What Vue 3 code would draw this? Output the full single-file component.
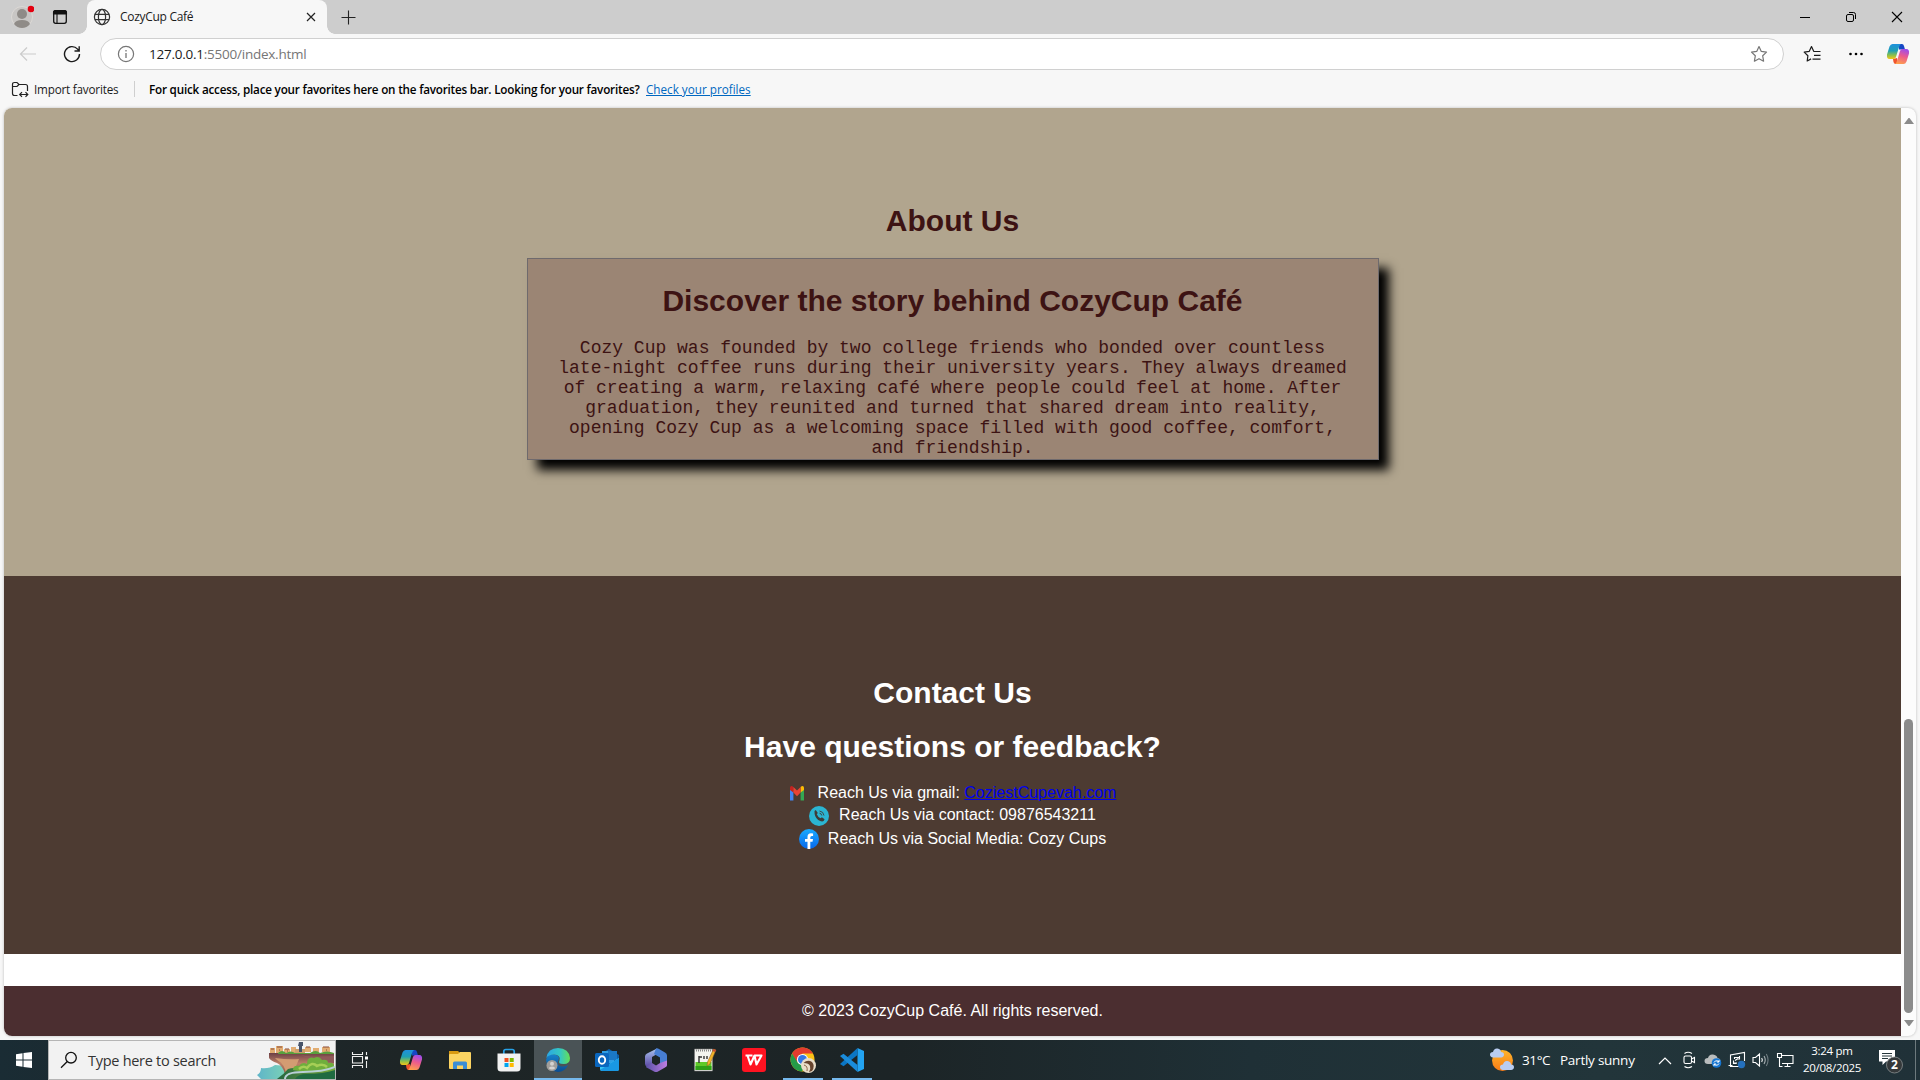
<script setup>
const story = [
  'Cozy Cup was founded by two college friends who bonded over countless',
  'late-night coffee runs during their university years. They always dreamed',
  'of creating a warm, relaxing café where people could feel at home. After',
  'graduation, they reunited and turned that shared dream into reality,',
  'opening Cozy Cup as a welcoming space filled with good coffee, comfort,',
  'and friendship.'
]
</script>

<template>
  <div class="screen">
    <header class="tabs">
      <svg class="avatar" width="24" height="24" viewBox="0 0 24 24">
        <circle cx="12" cy="12" r="10.500" fill="#c8c6c4" stroke="#dcd9d6" />
        <circle cx="12" cy="9" r="5" fill="#8f8b87" />
        <path d="M4 19q1.500-4 8-4t8 4q-3 4-8 4t-8-4z" fill="#8f8b87" />
        <circle cx="21" cy="4" r="3.300" fill="#e3000f" />
      </svg>
      <svg class="tabmenu" width="16" height="16" viewBox="0 0 16 16">
        <rect x="1.700" y="1.700" width="12.600" height="12.600" rx="2" fill="none" stroke="#111" stroke-width="1.300" />
        <path d="M1.500 5V3.500q0-2 2-2h9q2 0 2 2V5zM5 5v9" fill="#111" stroke="#111" stroke-width="1.100" />
      </svg>
      <div class="tab">
        <svg width="18" height="18" viewBox="0 0 18 18" fill="none" stroke="#333" stroke-width="1.200">
          <circle cx="9" cy="9" r="7.600" /><ellipse cx="9" cy="9" rx="3.600" ry="7.600" /><path d="M2 6.300h14M2 11.700h14" />
        </svg>
        <span class="ui title">CozyCup Café</span>
        <svg class="close" width="10" height="10" viewBox="0 0 10 10"><path d="M1 1l8 8M9 1l-8 8" stroke="#222" stroke-width="1.200" /></svg>
      </div>
      <svg class="plus" width="16" height="16" viewBox="0 0 16 16"><path d="M7.500 1.500v14M.5 8.500h14" stroke="#222" stroke-width="1.100" /></svg>
      <div class="wincontrols">
        <svg width="12" height="12" viewBox="0 0 12 12"><path d="M1 6.500h10" stroke="#000" /></svg>
        <svg width="12" height="12" viewBox="0 0 12 12" fill="none" stroke="#000"><rect x="1.500" y="3.500" width="7" height="7" rx="1.500" /><path d="M4 1.500h4.500q2 0 2 2V8" /></svg>
        <svg width="12" height="12" viewBox="0 0 12 12"><path d="M1 1l10 10M11 1L1 11" stroke="#000" stroke-width="1.100" /></svg>
      </div>
    </header>

    <div class="toolbar">
      <svg class="back" width="18" height="16" viewBox="0 0 18 16" fill="none" stroke="#cbcbcb" stroke-width="1.200"><path d="M17 8H1.500M8 1.500L1.500 8 8 14.500" /></svg>
      <svg class="reload" width="18" height="18" viewBox="0 0 18 18" fill="none" stroke="#1b1b1b" stroke-width="1.400"><path d="M16.500 9A7.500 7.500 0 1 1 14.600 4.100L16 5.800M16.200 1.300v4.700h-4.700" /></svg>
      <div class="address">
        <svg width="18" height="18" viewBox="0 0 18 18"><circle cx="9" cy="9" r="7.600" fill="none" stroke="#767676" stroke-width="1.200" /><path d="M9 8v5M9 5v1.500" stroke="#767676" stroke-width="1.300" /></svg>
        <span class="ui url"><b>127.0.0.1</b>:5500/index.html</span>
        <svg class="star" width="18" height="18" viewBox="0 0 18 18" fill="none" stroke="#767676" stroke-width="1.200" stroke-linejoin="round"><path d="M9 1.500l2.300 4.900 5.200.7-3.800 3.700.9 5.400L9 13.700l-4.600 2.500.9-5.400L1.500 7.100l5.200-.7z" /></svg>
      </div>
      <svg class="favs" width="18" height="18" viewBox="0 0 18 18" fill="none" stroke="#1b1b1b" stroke-width="1.200" stroke-linejoin="round"><path d="M12 6.500l-1.300-.2L8.500 1.500 6.300 6.300l-5.100.8L4.900 10.700 4.200 16l3.900-2.100M11 6.500h6.500M11 10.300h6.500M9.500 14.100h8" /></svg>
      <svg class="dots" width="16" height="4" viewBox="0 0 16 4"><circle cx="2.500" cy="2" r="1.300" /><circle cx="8" cy="2" r="1.300" /><circle cx="13.500" cy="2" r="1.300" /></svg>
      <svg class="copilot" width="24" height="22" viewBox="0 0 24 22"><use href="#copilot" /></svg>
    </div>

    <div class="favbar">
      <svg width="18" height="17" viewBox="0 0 18 17" fill="none" stroke="#222" stroke-width="1.200"><path d="M6.500 14.500H3.500q-2 0-2-2V3.500q0-2 2-2h2.500l2 2h6.500q2 0 2 2V10M1.500 5.500h4.500l2-2M9 13.500h7.500M11 11.200l-2.300 2.300L11 15.800M14.500 11.200l2.300 2.300-2.300 2.300" /></svg>
      <span class="ui import">Import favorites</span>
      <i class="sep"></i>
      <span class="ui hint">For quick access, place your favorites here on the favorites bar. Looking for your favorites?</span>
      <span class="ui profiles">Check your profiles</span>
    </div>

    <div class="viewport">
      <main>
        <section class="about">
          <h1>About Us</h1>
          <div class="box">
            <h1>Discover the story behind CozyCup Café</h1>
            <p><span v-for="line in story" :key="line">{{ line }}</span></p>
          </div>
        </section>
        <section class="contact">
          <h1>Contact Us</h1>
          <h1 class="question">Have questions or feedback?</h1>
          <div class="line l1">
            <svg width="16" height="16" viewBox="0 0 16 16"><path d="M1 2.500v13h3.400V6z" fill="#4285f4" /><path d="M15 2.500v13h-3.400V6z" fill="#34a853" /><path d="M1 2.500Q2-.2 4.400 2v5.500L1 5z" fill="#c5221f" /><path d="M15 2.500Q14-.2 11.600 2v5.500L15 5z" fill="#fbbc04" /><path d="M4.400 2L8 5.500 11.600 2v5.500L8 11.200 4.400 7.500z" fill="#ea4335" /></svg>
            <span>Reach Us via gmail: <a>CoziestCupevah.com</a></span>
          </div>
          <div class="line l2">
            <svg width="20" height="20" viewBox="0 0 20 20"><circle cx="10" cy="10" r="10" fill="#2bb5d2" /><path d="M5.500 5l1.300-1 2 3-1 1.300q.9 2.500 3.800 4l1.300-1 2.700 2-1 1.700q-2 1.200-5.400-1Q5.200 11 5.500 5z" fill="#3f3c38" /><path d="M10.500 5q4 .5 4.500 4.500M10.500 7.200q2 .3 2.300 2.300" fill="none" stroke="#3f3c38" stroke-width=".9" /></svg>
            <span>Reach Us via contact: 09876543211</span>
          </div>
          <div class="line l3">
            <svg width="20" height="20" viewBox="0 0 20 20"><defs><linearGradient id="fb" x2="0" y2="1"><stop stop-color="#19aafe" /><stop offset="1" stop-color="#0868ec" /></linearGradient></defs><circle cx="10" cy="10" r="10" fill="url(#fb)" /><path d="M8.500 20v-7.200H6V10h2.500V8Q8.500 4.300 12 4.300l2.100.2v2.400h-1.300q-1.500 0-1.500 1.500V10H14l-.5 2.800h-2.200V20z" fill="#fff" /></svg>
            <span>Reach Us via Social Media: Cozy Cups</span>
          </div>
        </section>
        <footer>© 2023 CozyCup Café. All rights reserved.</footer>
      </main>
      <div class="scroll">
        <svg width="10" height="6" viewBox="0 0 10 6"><path d="M0 6L4.500 0h1L10 6z" fill="#8b8b8b" /></svg>
        <i class="thumb"></i>
        <svg width="10" height="6" viewBox="0 0 10 6"><path d="M0 0L4.500 6h1L10 0z" fill="#8b8b8b" /></svg>
      </div>
    </div>

    <div class="taskbar">
      <div class="start"><svg width="16" height="16" viewBox="0 0 16 16" fill="#fff"><path d="M0 2.200L6.500 1.200V7.500H0zM7.500 1L16 0v7.500H7.500zM0 8.500h6.500v6.300L0 13.800zM7.500 8.500H16V16l-8.500-1.100z" /></svg></div>
      <div class="search">
        <svg class="glass" width="18" height="18" viewBox="0 0 18 18" fill="none" stroke="#111" stroke-width="1.300"><circle cx="11" cy="6.700" r="5.300" /><path d="M7.300 10.500L1 16.700" /></svg>
        <span class="ui">Type here to search</span>
        <svg class="art" width="78" height="38" viewBox="0 0 78 38">
          <defs>
            <linearGradient id="cliff" x2="0" y2="1"><stop stop-color="#6d3f45" /><stop offset=".5" stop-color="#bd8067" /><stop offset="1" stop-color="#8d5a4c" /></linearGradient>
            <linearGradient id="hill" x2="1" y2="0"><stop stop-color="#23663f" /><stop offset="1" stop-color="#7aa63c" /></linearGradient>
            <linearGradient id="sea" x2="1" y2="0"><stop stop-color="#5fb5c9" /><stop offset="1" stop-color="#7fd6b4" /></linearGradient>
          </defs>
          <path d="M0 34q4-2 4-7 8 1 14-3 6 0 12 2l4 12H4z" fill="url(#sea)" />
          <path d="M12 12h65v18H36q-4-1-8 3-2-8-8-11-6-2-8-5z" fill="url(#cliff)" />
          <path d="M18 17q14 2 24 1l-5 12q-4 0-8 4 0-10-9-15z" fill="#d39c72" />
          <path d="M44 14q10 3 33 1v7q-20-1-33-8z" fill="#8f5a5a" />
          <g fill="#e2ad72"><path d="M13 7h5v5h-5zM19 5h7v7h-7zM27 8h6v4h-6zM34 6h5v6h-5zM48 6h6v5h-6zM56 7h6v4h-6zM65 6h8v5h-8z" /><path d="M38 8h10v4H38z" fill="#cda06c" /></g>
          <path d="M14 8h3M20 6h5M28 8h4M49 6h4M66 6h6M22 9h1M30 10h1M69 9h1" stroke="#8a4d38" />
          <path d="M42 1h4v4h-1v6h-3V5h-1z" fill="#475369" />
          <path d="M21 12q4-4 8 0 5-3 9 0h15q6-4 10 0 7-3 14 0v1H21z" fill="#59a03d" />
          <path d="M20 38q7-5 11-10 6-2 12 0l35-2v12z" fill="url(#hill)" />
          <path d="M36 29q0-5 6-4 3-5 8-2 0-8 7-6 5-3 8 2 6-1 6 3 6-1 6 3v3q-18 6-41 1z" fill="#6fae3d" />
          <path d="M42 28q4-4 8-1 5-7 10-2 6-3 10 1" fill="none" stroke="#a6cf56" stroke-width="2.500" />
          <path d="M78 26q-12 5-32 5-18 0-18 7" fill="none" stroke="#b9cfd6" stroke-width="2" />
          <path d="M38 38q3-5 12-5 16 0 28-4v9z" fill="#1f6a41" />
        </svg>
      </div>
      <div class="cell view"><svg width="18" height="16" viewBox="0 0 18 16" fill="none" stroke="#eee" stroke-width="1.100"><path d="M1.500 0v2.500h10V0M1.500 16v-2.500h10V16M1.500 4.500h10v6.500h-10zM15.500 0v3M15.500 9v7" /><path d="M14 4.500h3v3h-3z" fill="#fff" stroke="none" /></svg></div>
      <div class="apps">
        <div class="cell"><svg width="24" height="22" viewBox="0 0 24 22"><use href="#copilot" /></svg></div>
        <div class="cell"><svg width="24" height="24" viewBox="0 0 24 24"><path d="M1 3h9l2 2v3H1z" fill="#d99a12" /><path d="M1 7q0-1 1-1h8l2-2h10q1 0 1 1v15q0 1-1 1H2q-1 0-1-1z" fill="#fcd462" /><path d="M5 21v-6q0-1.500 1.500-1.500h11Q19 13.500 19 15v6h-4v-3.500H9V21z" fill="#3b8ed6" /></svg></div>
        <div class="cell"><svg width="24" height="24" viewBox="0 0 24 24"><path d="M6.800 7V3.500q0-2 2-2h6.400q2 0 2 2V7" fill="none" stroke="#27a2e8" stroke-width="1.700" /><path d="M.5 5.500h23V20q0 3.500-3.500 3.500H4Q.5 23.500.5 20z" fill="#f2f2f2" /><path d="M7.500 10h4v4h-4z" fill="#f25022" /><path d="M12.700 10h4v4h-4z" fill="#7fba00" /><path d="M7.500 15h4v4h-4z" fill="#00a4ef" /><path d="M12.700 15h4v4h-4z" fill="#ffb900" /></svg></div>
        <div class="cell active"><svg width="24" height="24" viewBox="0 0 24 24"><defs><linearGradient id="e1"><stop stop-color="#2aa5e6" /><stop offset=".6" stop-color="#35c8c0" /><stop offset="1" stop-color="#66df55" /></linearGradient><linearGradient id="e2" x2="0" y2="1"><stop stop-color="#1683cd" /><stop offset="1" stop-color="#0b4c91" /></linearGradient></defs><path d="M0 12Q2 4 10 7q4 1 2.500 5-3 5 2.500 6.500 4 .5 7-1.500Q19 24 12 24 1 23 0 12z" fill="url(#e2)" /><path d="M.3 10Q2 0 12 0q11 .5 12 10 0 6-6.500 6-6 0-4-3.500Q15 7 8 6.500 2.500 6.500.3 10z" fill="url(#e1)" /><circle cx="6" cy="17.500" r="5.500" fill="#a09e9b" /><circle cx="6" cy="15.800" r="2" fill="#d4d2d0" /><path d="M3 20.500q0-2 3-2t3 2q-3 2-6 0z" fill="#d4d2d0" /></svg></div>
        <div class="cell"><svg width="26" height="24" viewBox="0 0 26 24"><path d="M5 7L15 1l10 6v4l-10 6z" fill="#0d5ea8" /><path d="M8 3h12v12H8z" fill="#2e9ee4" /><path d="M14 3h9v9h-9z" fill="#1b78c5" /><path d="M6 11l9 5 10-6v11q0 2-2 2H8q-2 0-2-2z" fill="#35c3f3" /><path d="M6 22l19-12v11q0 2-2 2H8z" fill="#1998e3" /><rect x="1" y="5" width="14" height="14" rx="1.500" fill="#0a66bd" /><ellipse cx="8" cy="12" rx="3.200" ry="3.800" fill="none" stroke="#fff" stroke-width="1.900" /></svg></div>
        <div class="cell"><svg width="24" height="24" viewBox="0 0 24 24"><defs><linearGradient id="m1" x2="0" y2="1"><stop stop-color="#a9c3ed" /><stop offset="1" stop-color="#5946a3" /></linearGradient><linearGradient id="m2" x2="1" y2="0"><stop stop-color="#5c52a8" /><stop offset="1" stop-color="#bd7de2" /></linearGradient></defs><path d="M13 .5L3 5.500Q1 6.500 1 8.500V16q0 2 2.500 3L8 17V9l6-3.500z" fill="url(#m1)" /><path d="M12 .5q1.500-.5 3 .5l6 3.500q2 1 2 3V16q0 1.500-1 2.500L16 15V9.500L10 6z" fill="#477ed3" /><path d="M2 18.500L8 15l4 2.500 4-2.500 7-2.500V17q0 1.500-2 2.500l-7 4q-2 1-4 0l-6.500-3.500Q2 19.500 2 18.500z" fill="url(#m2)" /></svg></div>
        <div class="cell"><svg width="24" height="24" viewBox="0 0 24 24"><path d="M1.500 1h18v22h-18z" fill="#f3f4ef" stroke="#777" stroke-width=".6" /><path d="M2.500 14h16v8h-16z" fill="#5fca28" /><path d="M2.500 18h16v4h-16z" fill="#2fa018" /><path d="M3 2.500h16" stroke="#888" stroke-dasharray="1 1" stroke-width="2" /><path d="M6 8v7M6 9h3M11 8v3M14 8v3" stroke="#333" stroke-width="1.400" /><path d="M20.500 1l2.500 1-6 14-3 2 .5-4z" fill="#f0b229" stroke="#8a5920" stroke-width=".5" /><path d="M20.500 1l2.500 1-1 2-2.500-1z" fill="#c84c34" /></svg></div>
        <div class="cell"><svg width="24" height="24" viewBox="0 0 24 24"><rect width="24" height="24" rx="3" fill="#ff1321" /><path d="M3.500 7.500h7M5.500 7.500l3 9 4-9 2 9 5-9h-7" fill="none" stroke="#fff" stroke-width="2.100" stroke-linejoin="round" /></svg></div>
        <div class="cell running"><svg width="26" height="26" viewBox="0 0 26 26"><circle cx="12.500" cy="12.500" r="12" fill="#fbc116" /><path d="M2.100 6.500A12 12 0 0 1 23 6.500H12.500L7 16z" fill="#e33b2e" /><path d="M2.100 6.500A12 12 0 0 0 12 24.500L17 15l-9 1z" fill="#259b48" /><circle cx="12.500" cy="12.500" r="5.600" fill="#fff" /><circle cx="12.500" cy="12.500" r="4.500" fill="#3478e6" /><circle cx="18.500" cy="18.500" r="7.500" fill="#e9ddc9" /><path d="M13.500 16q4-4 8.500-1 3.500 4 0 9l-3 1q2-3 1-6-1-3-6.500-3z" fill="#67442e" /><path d="M14 18q4 1 3 6" fill="none" stroke="#8d6748" /></svg></div>
        <div class="cell running"><svg width="24" height="24" viewBox="0 0 24 24"><path d="M17.500 0L24 3v18l-6.500 3z" fill="#23a4f2" /><path d="M17.500 0v7L3.500 18.200 0 16z" fill="#0b76c4" /><path d="M17.500 24v-7L3.500 5.800 0 8z" fill="#1a8cdb" /></svg></div>
      </div>
      <div class="tray">
        <svg class="weather" width="26" height="24" viewBox="0 0 26 24"><defs><linearGradient id="sun" x2="0" y2="1"><stop stop-color="#ffb52c" /><stop offset="1" stop-color="#f77b16" /></linearGradient></defs><circle cx="13.500" cy="12.500" r="10.500" fill="url(#sun)" /><path d="M4 9.500Q1 9 1 6.500T4 4q1-4 4.500-3.500T12 4q3 0 3 2.500t-3 3z" fill="#b9cdf2" /><path d="M14 22q-3-.5-3-3t3-2.500q1-4 4.500-3.500T22 16.500q3 0 3 2.500t-3 3z" fill="#b9cdf2" /></svg>
        <span class="ui temp">31°C</span>
        <span class="ui cond">Partly sunny</span>
        <svg class="caret" width="14" height="9" viewBox="0 0 14 9"><path d="M1 8l6-6 6 6" fill="none" stroke="#fff" stroke-width="1.200" /></svg>
        <div class="icons">
          <svg width="18" height="18" viewBox="0 0 18 18" fill="none" stroke="#fff" stroke-width="1.100"><rect x="4" y="5" width="7.500" height="7.500" rx="1.500" /><path d="M11.500 8l3-1.500v5l-3-1.500M4.500 2.500Q8 0 12 2.500M4.500 15.500Q8 18 12 15.500" /></svg>
          <svg width="18" height="18" viewBox="0 0 18 18"><path d="M4 13q-3.500 0-3.500-3T4 7q1-4 5-3.500T13.500 7q3 .5 3 3T13 13z" fill="#b9bcbd" /><circle cx="12.500" cy="12" r="4.800" fill="#1676d2" /><path d="M10 11.500q1-2.500 4-1.500l1 1M15 12.500q-1 2.500-4 1.500l-1-1M15 9v2h-2M10 15v-2h2" fill="none" stroke="#fff" /></svg>
          <svg width="18" height="18" viewBox="0 0 18 18" fill="none" stroke="#fff" stroke-width="1.100"><path d="M12 15.500H2.500V4L16.500 1.500V10M.5 14.500h4" /><path d="M6.500 8V6.500h4.500M11.500 5v3h-2M6 12h3M5.500 9.500v3h3M7 9.500l3-2" /><circle cx="13.500" cy="13.500" r="3.700" fill="#2470bd" stroke="none" /></svg>
          <svg width="18" height="18" viewBox="0 0 18 18" fill="none" stroke="#fff" stroke-width="1.100"><path d="M1 6.500h2.500L7.500 3v12l-4-3.500H1zM9.700 7q1.300 2 0 4" /><path d="M12 5q2.500 4 0 8" stroke="#a9b1b4" /><path d="M14.300 3q3.500 6 0 12" stroke="#707d82" /></svg>
          <svg width="18" height="18" viewBox="0 0 18 18" fill="none" stroke="#fff" stroke-width="1.100"><path d="M5 4.500h12v8H6M8.500 15.500h6M11.500 12.500v3M3.500 6v9.500h3M1.500 2.500h4v4h-4z" /></svg>
        </div>
        <div class="clock ui"><span>3:24 pm</span><span>20/08/2025</span></div>
        <div class="notes"><svg width="28" height="26" viewBox="0 0 28 26"><path d="M1 1h16v11.500H8L4.500 16v-3.500H1z" fill="#fff" /><path d="M4 4.500h10M4 7h10M4 9.500h6" stroke="#26363b" /><circle cx="16.500" cy="16" r="8" fill="#34383a" stroke="#898f91" stroke-width=".8" /></svg><b class="ui">2</b></div>
        <i class="peek"></i>
      </div>
    </div>
    <svg class="defs" width="0" height="0" viewBox="0 0 24 22">
      <defs>
        <linearGradient id="c1" x1=".3" y1="0" x2=".3" y2="1"><stop stop-color="#1f90dd" /><stop offset=".45" stop-color="#1fa0b4" /><stop offset=".75" stop-color="#8cc14b" /><stop offset="1" stop-color="#f5c518" /></linearGradient>
        <linearGradient id="c2" x1=".6" y1="0" x2=".3" y2="1"><stop stop-color="#a04de8" /><stop offset=".45" stop-color="#ec5a8e" /><stop offset="1" stop-color="#ffa04b" /></linearGradient>
        <g id="copilot">
          <path d="M13 1h3q1.500 0 2 2l1 3.500h-6z" fill="#1647c4" />
          <path d="M7 16l4-1 1 6H9.500q-1.500 0-2-2z" fill="#f0542c" />
          <path d="M6.500 1H15q-1.500 1-2.300 4L10 14q-.7 2-2.500 2H3.500Q.5 16 1 11.500L3.500 3.500Q4.500 1 6.500 1z" fill="url(#c1)" />
          <path d="M17.500 21H9q1.500-1 2.300-4L14 8q.7-2 2.500-2h4q3 0 2.500 4.500L20.500 18.500Q19.500 21 17.500 21z" fill="url(#c2)" />
        </g>
      </defs>
    </svg>
  </div>
</template>

<style>
body { margin: 0; overflow: hidden; }
</style>

<style scoped>
* { box-sizing: border-box; }
svg { display: block; flex: none; }
.defs { position: absolute; }
.screen { width: 1920px; height: 1080px; display: flex; flex-direction: column; background: #f7f7f7; overflow: hidden; }
.ui { font-family: "Open Sans", "Noto Sans", sans-serif; white-space: nowrap; }
.tabs { height: 34px; flex: none; background: #cdcdcd; display: flex; align-items: center; }
.avatar { margin-left: 10px; }
.tabmenu { margin-left: 18px; }
.tab { width: 240px; height: 34px; margin-left: 19px; padding: 0 11px 0 6px; background: #f7f7f7; border-radius: 8px 8px 0 0; display: flex; align-items: center; position: relative; }
.tab::before, .tab::after { content: ""; position: absolute; bottom: 0; width: 8px; height: 8px; }
.tab::before { left: -8px; background: radial-gradient(circle at 0 0, transparent 7.500px, #f7f7f7 8px); }
.tab::after { right: -8px; background: radial-gradient(circle at 100% 0, transparent 7.500px, #f7f7f7 8px); }
.title { margin-left: 9px; font-size: 12px; line-height: 16px; letter-spacing: -.3px; color: #1b1b1b; }
.close { margin-left: auto; }
.plus { margin-left: 14px; }
.wincontrols { margin-left: auto; margin-right: 17px; display: flex; gap: 34px; }
.toolbar { height: 40px; flex: none; display: flex; align-items: center; }
.back { margin-left: 19px; }
.reload { margin-left: 26px; }
.address { width: 1684px; height: 32px; margin-left: 19px; padding: 0 15px 0 16px; border: 1px solid #d0d0d0; border-radius: 16px; background: #fff; display: flex; align-items: center; }
.url { margin-left: 14px; font-size: 13.500px; letter-spacing: -.24px; color: #767676; line-height: 20px; }
.url b { font-weight: 400; color: #1b1b1b; }
.star { margin-left: auto; }
.favs { margin-left: 19px; }
.dots { margin-left: 27px; }
.copilot { margin-left: 22px; }
.favbar { height: 34px; flex: none; display: flex; align-items: center; padding: 0 0 4px 11px; font-size: 11.700px; line-height: 16px; color: #1b1b1b; }
.import { width: 84px; margin-left: 5px; letter-spacing: -.2px; }
.sep { width: 1px; height: 16px; background: #cfcfcf; margin-left: 16px; }
.hint { width: 491px; margin-left: 14px; font-weight: 600; letter-spacing: -.205px; color: #000; }
.profiles { margin-left: 6px; color: #0067c0; text-decoration: underline; }
.viewport { height: 928px; flex: none; margin: 0 4px; border-radius: 8px; overflow: hidden; display: flex; background: #fcfcfc; box-shadow: 0 0 3px rgba(0, 0, 0, .25); }
main { width: 1897px; background: #fff; font-family: "Liberation Sans", Arial, sans-serif; font-size: 16px; text-align: center; }
h1 { margin: 0; font-size: 30px; line-height: 36px; font-weight: 700; }
.about { height: 468px; background: #b1a58e; color: #3d1313; padding-top: 95px; }
.box { width: 852px; height: 202px; margin: 19px auto 0; border: 1px solid #6f6a6d; background: #9b8574; box-shadow: 10px 10px 10px #000; padding-top: 24px; }
.box p { margin: 19px 0 0; font: 18px/20px "Liberation Mono", "Courier New", monospace; }
.box p span { display: block; white-space: nowrap; }
.contact { height: 378px; background: #4d3b32; color: #fff; padding-top: 99px; }
.question { margin-top: 18px; }
.line { display: flex; justify-content: center; align-items: center; }
.l1 { margin-top: 17px; height: 22px; gap: 13px; }
.l2 { height: 23px; gap: 10px; }
.l2 span { padding-bottom: 2px; }
.l3 { height: 24px; gap: 9px; }
.line a { color: #00e; text-decoration: underline; }
footer { margin-top: 32px; height: 50px; line-height: 50px; background: #4b2e30; color: #fff; }
.scroll { width: 15px; display: flex; flex-direction: column; align-items: center; padding: 10px 0; }
.thumb { width: 9px; height: 294px; margin-top: auto; margin-bottom: 7px; border-radius: 5px; background: #8b8b8b; }
.taskbar { height: 40px; margin-top: 4px; flex: none; display: flex; background: linear-gradient(90deg, #1a2c34 0, #1e2526 400px, #1c2426 900px, #1f3036 1250px, #22353a 1600px, #203138); color: #fff; }
.start { width: 48px; display: flex; align-items: center; justify-content: center; }
.search { width: 288px; border: 1px solid #b5b5b5; background: #f2f2f2; display: flex; align-items: center; color: #333; padding-left: 11px; font-size: 14.500px; letter-spacing: -.28px; overflow: hidden; }
.search span { margin-left: 10px; }
.art { margin-left: auto; }
.cell { width: 48px; height: 40px; display: flex; align-items: center; justify-content: center; }
.apps { display: flex; gap: 1px; margin-left: 3px; }
.active { background: #4a5356; border-bottom: 2px solid #76b9ed; padding-top: 2px; }
.running { background: linear-gradient(#76b9ed, #76b9ed) center bottom / 40px 2px no-repeat; }
.tray { margin-left: auto; display: flex; align-items: center; }
.temp { margin-left: 7px; font-size: 13.500px; letter-spacing: -.4px; width: 38px; }
.cond { font-size: 13.500px; letter-spacing: -.25px; width: 98px; }
.icons { display: flex; gap: 6px; margin-left: 8px; }
.clock { width: 60px; margin-left: 8px; padding-bottom: 2px; display: flex; flex-direction: column; align-items: center; font-size: 11.500px; letter-spacing: -.3px; line-height: 17px; }
.notes { width: 28px; margin-left: 16px; padding-top: 4px; position: relative; }
.notes b { position: absolute; left: 13px; top: 11px; font-size: 12px; line-height: 17px; }
.peek { width: 1px; height: 40px; background: #6d797d; margin: 0 4px 0 9px; }
</style>
